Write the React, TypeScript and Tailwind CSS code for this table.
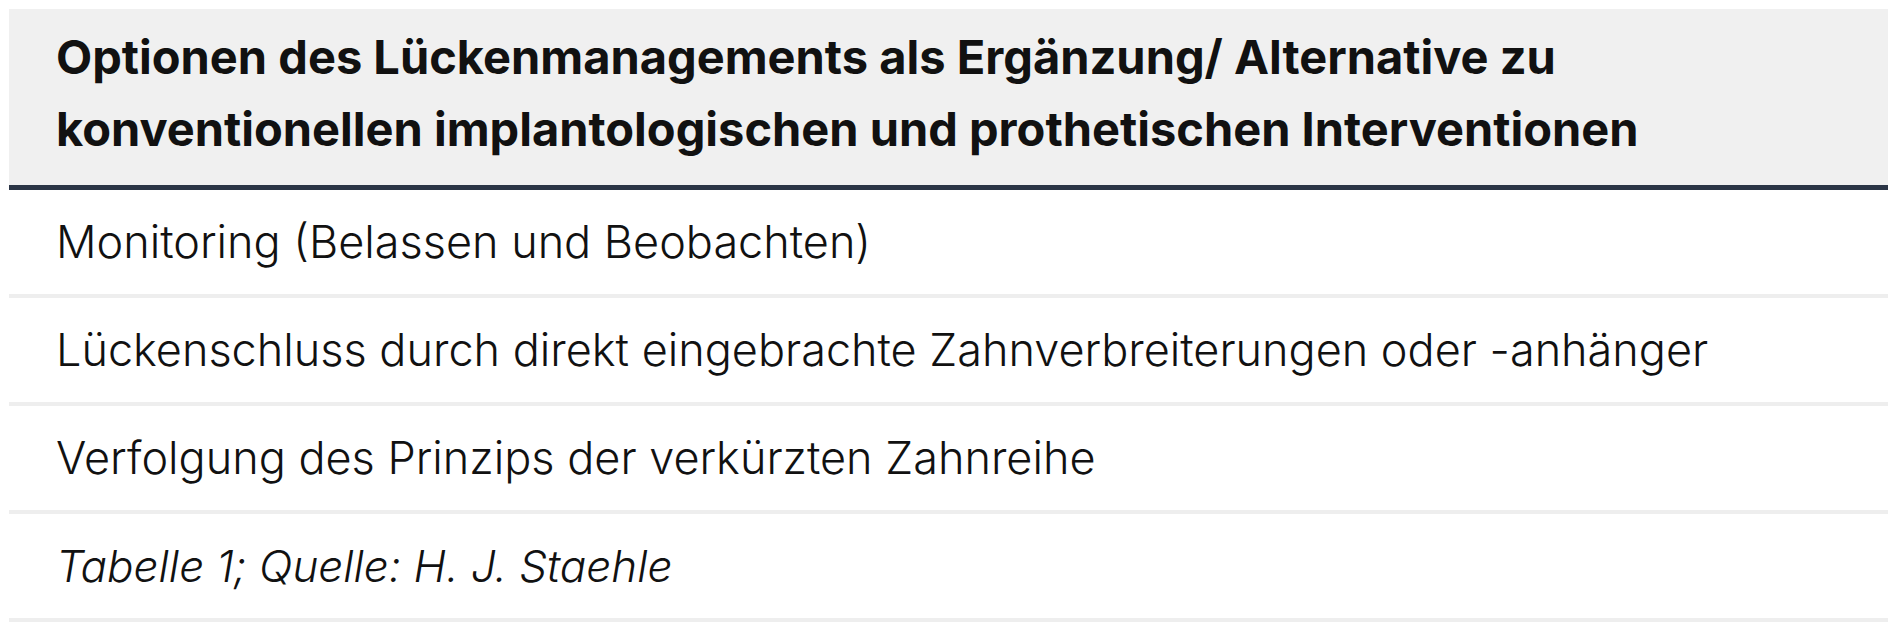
const rows = [
  'Monitoring (Belassen und Beobachten)',
  'Lückenschluss durch direkt eingebrachte Zahnverbreiterungen oder -anhänger',
  'Verfolgung des Prinzips der verkürzten Zahnreihe',
];

export default function App() {
  return (
    <div className="min-h-screen bg-white pl-[9px] pr-[12px] pt-[9px] text-[#111] font-['Inter',sans-serif]">
      <table className="w-full border-collapse">
        <thead>
          <tr className="bg-[#f0f0f0] border-b-[5px] border-[#2b3546]">
            <th className="pl-[47px] pr-[52px] pt-[12px] pb-[20px] text-left text-[47px] leading-[72px] font-bold">
              Optionen des Lückenmanagements als Ergänzung/ Alternative zu konventionellen implantologischen und
              prothetischen Interventionen
            </th>
          </tr>
        </thead>
        <tbody>
          {rows.map((r) => (
            <tr key={r} className="border-b-4 border-[#eeeeee]">
              <td className="pl-[47px] h-[108px] text-[45px] font-light leading-[66px]">{r}</td>
            </tr>
          ))}
          {/* source line, italic */}
          <tr className="border-b-4 border-[#eeeeee]">
            <td className="pl-[47px] h-[108px] text-[44px] font-light italic leading-[66px]">Tabelle 1; Quelle: H. J. Staehle</td>
          </tr>
        </tbody>
      </table>
    </div>
  );
}
